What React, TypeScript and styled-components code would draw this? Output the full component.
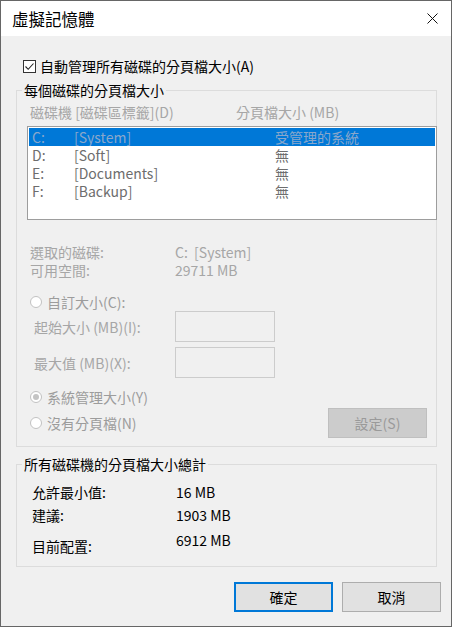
import React from 'react';
import styled, { createGlobalStyle } from 'styled-components';

const GlobalStyle = createGlobalStyle`
  html, body {
    margin: 0;
    padding: 0;
    background: #ffffff;
  }
  body {
    font-family: "Noto Sans CJK TC", "Noto Sans", sans-serif;
    font-size: 14px;
  }
  * {
    box-sizing: border-box;
  }
`;

const Window = styled.div`
  width: 452px;
  height: 627px;
  border: 1px solid #666666;
  display: flex;
  flex-direction: column;
  background: #f0f0f0;
`;

const TitleBar = styled.div`
  height: 35px;
  background: #ffffff;
  display: flex;
  align-items: center;
  padding-left: 11px;
`;

const Title = styled.span`
  flex: 1;
  font-size: 16.5px;
  color: #000;
  line-height: 20px;
`;

const CloseButton = styled.div`
  width: 38px;
  height: 35px;
  display: flex;
  align-items: center;
  justify-content: center;
`;

const Body = styled.div`
  flex: 1;
  display: flex;
  flex-direction: column;
  padding: 21px 10px 0 15px;
`;

const CheckRow = styled.label`
  display: flex;
  align-items: center;
  height: 18px;
  margin-left: 7px;
  gap: 4px;
  color: #000;
  line-height: 18px;
`;

const CheckBox = styled.span`
  width: 13px;
  height: 13px;
  border: 1px solid #333;
  background: #fff;
  display: flex;
  align-items: center;
  justify-content: center;
`;

const Group = styled.fieldset<{ $top: number }>`
  margin: ${(p) => p.$top}px 4px 0 0;
  padding: 0;
  border: 1px solid #dcdcdc;
  min-width: 0;
`;

const Legend = styled.legend`
  margin-left: 5px;
  padding: 0 2px;
  line-height: 20px;
  color: #000;
`;

const GroupInner = styled.div<{ $pad: string }>`
  padding: ${(p) => p.$pad};
  display: flex;
  flex-direction: column;
`;

const HeaderRow = styled.div`
  display: grid;
  grid-template-columns: 206px 1fr;
  line-height: 18px;
  height: 18px;
  padding-left: 13px;
  color: #a6a6a6;
  white-space: nowrap;
`;

const ListBox = styled.div`
  margin: 5px 0 0 10px;
  width: 410px;
  height: 94px;
  border: 1px solid #9d9d9d;
  background: #fff;
  padding: 1px;
`;

const ListRow = styled.div<{ $selected?: boolean }>`
  display: grid;
  grid-template-columns: 42px 201px 1fr;
  height: 18px;
  line-height: 18px;
  padding-left: 3px;
  overflow: hidden;
  background: ${(p) => (p.$selected ? '#0078d7' : 'transparent')};
  color: ${(p) => (p.$selected ? '#8aa7cb' : '#6d6d6d')};
  white-space: nowrap;
`;

const InfoGrid = styled.div<{ $cols: number; $left: number; $top: number; $color: string }>`
  display: grid;
  grid-template-columns: ${(p) => p.$cols}px 1fr;
  margin-top: ${(p) => p.$top}px;
  padding-left: ${(p) => p.$left}px;
  line-height: 18px;
  color: ${(p) => p.$color};
  white-space: nowrap;
`;

const RadioRow = styled.div<{ $top: number }>`
  display: flex;
  align-items: center;
  gap: 5px;
  height: 18px;
  line-height: 18px;
  margin-top: ${(p) => p.$top}px;
  padding-left: 13px;
  color: #9c9c9c;
  white-space: nowrap;
`;

const RadioCircle = styled.span<{ $checked?: boolean }>`
  width: 12px;
  height: 12px;
  border-radius: 50%;
  border: 1px solid #c2c2c2;
  background: #fff;
  display: flex;
  align-items: center;
  justify-content: center;
  &::after {
    content: '';
    width: 6px;
    height: 6px;
    border-radius: 50%;
    background: ${(p) => (p.$checked ? '#c4c4c4' : 'transparent')};
  }
`;

const SizeRow = styled.div<{ $top: number }>`
  display: grid;
  grid-template-columns: 141px 100px;
  align-items: center;
  height: 31px;
  margin-top: ${(p) => p.$top}px;
  padding-left: 17px;
  color: #a6a6a6;
  white-space: nowrap;
`;

const SizeInput = styled.div`
  width: 100px;
  height: 31px;
  border: 1px solid #cccccc;
  background: #f0f0f0;
`;

const BottomRow = styled.div`
  display: flex;
  align-items: center;
  justify-content: space-between;
  height: 30px;
  margin-top: 2px;
  padding-right: 9px;
`;

const Button = styled.button<{ $primary?: boolean; $disabled?: boolean }>`
  width: 99px;
  height: 30px;
  font-family: inherit;
  font-size: 14px;
  padding: 0;
  background: ${(p) => (p.$disabled ? '#cccccc' : '#e1e1e1')};
  border: ${(p) =>
    p.$primary ? '2px solid #0078d7' : p.$disabled ? '1px solid #bfbfbf' : '1px solid #adadad'};
  color: ${(p) => (p.$disabled ? '#9a9a9a' : '#000')};
`;

const TotalRow = styled.div<{ $top: number; $height: number }>`
  display: grid;
  grid-template-columns: 144px 1fr;
  height: ${(p) => p.$height}px;
  margin-top: ${(p) => p.$top}px;
  padding-left: 15px;
  line-height: 18px;
  color: #000;
  white-space: nowrap;
`;

const TotalLabel = styled.span<{ $align?: string }>`
  align-self: ${(p) => p.$align || 'start'};
`;

const ButtonBar = styled.div`
  display: flex;
  justify-content: flex-end;
  gap: 9px;
  margin-top: 15px;
`;

const drives = [
  { letter: 'C:', label: '[System]', size: '受管理的系統', selected: true },
  { letter: 'D:', label: '[Soft]', size: '無' },
  { letter: 'E:', label: '[Documents]', size: '無' },
  { letter: 'F:', label: '[Backup]', size: '無' },
];

export default function App() {
  return (
    <>
      <GlobalStyle />
      <Window>
        <TitleBar>
          <Title>虛擬記憶體</Title>
          <CloseButton>
            <svg width="11" height="11" viewBox="0 0 11 11">
              <path d="M0.5 0.5 L10.5 10.5 M10.5 0.5 L0.5 10.5" stroke="#111" strokeWidth="1" />
            </svg>
          </CloseButton>
        </TitleBar>
        <Body>
          <CheckRow>
            <CheckBox>
              <svg width="11" height="11" viewBox="0 0 11 11">
                <path d="M1.5 5.5 L4.2 8.3 L9.5 2.5" fill="none" stroke="#222" strokeWidth="1.1" />
              </svg>
            </CheckBox>
            自動管理所有磁碟的分頁檔大小(A)
          </CheckRow>

          <Group $top={5}>
            <Legend>每個磁碟的分頁檔大小</Legend>
            <GroupInner $pad="3px 0 8px 0">
              <HeaderRow>
                <span>磁碟機 [磁碟區標籤](D)</span>
                <span>分頁檔大小 (MB)</span>
              </HeaderRow>
              <ListBox>
                {drives.map((d) => (
                  <ListRow key={d.letter} $selected={d.selected}>
                    <span>{d.letter}</span>
                    <span>{d.label}</span>
                    <span>{d.size}</span>
                  </ListRow>
                ))}
              </ListBox>
              <InfoGrid $cols={145} $left={13} $top={23} $color="#a6a6a6">
                <span>選取的磁碟:</span>
                <span>C:&nbsp; [System]</span>
                <span>可用空間:</span>
                <span>29711 MB</span>
              </InfoGrid>
              <RadioRow $top={14}>
                <RadioCircle />
                自訂大小(C):
              </RadioRow>
              <SizeRow $top={0}>
                <span>起始大小 (MB)(I):</span>
                <SizeInput />
              </SizeRow>
              <SizeRow $top={5}>
                <span>最大值 (MB)(X):</span>
                <SizeInput />
              </SizeRow>
              <RadioRow $top={10}>
                <RadioCircle $checked />
                系統管理大小(Y)
              </RadioRow>
              <BottomRow>
                <RadioRow $top={0}>
                  <RadioCircle />
                  沒有分頁檔(N)
                </RadioRow>
                <Button $disabled>設定(S)</Button>
              </BottomRow>
            </GroupInner>
          </Group>

          <Group $top={7}>
            <Legend>所有磁碟機的分頁檔大小總計</Legend>
            <GroupInner $pad="9px 0 11px 0">
              <TotalRow $top={0} $height={18}>
                <TotalLabel>允許最小值:</TotalLabel>
                <span>16 MB</span>
              </TotalRow>
              <TotalRow $top={5} $height={18}>
                <TotalLabel>建議:</TotalLabel>
                <span>1903 MB</span>
              </TotalRow>
              <TotalRow $top={7} $height={24}>
                <TotalLabel $align="end">目前配置:</TotalLabel>
                <span>6912 MB</span>
              </TotalRow>
            </GroupInner>
          </Group>

          <ButtonBar>
            <Button $primary>確定</Button>
            <Button>取消</Button>
          </ButtonBar>
        </Body>
      </Window>
    </>
  );
}
